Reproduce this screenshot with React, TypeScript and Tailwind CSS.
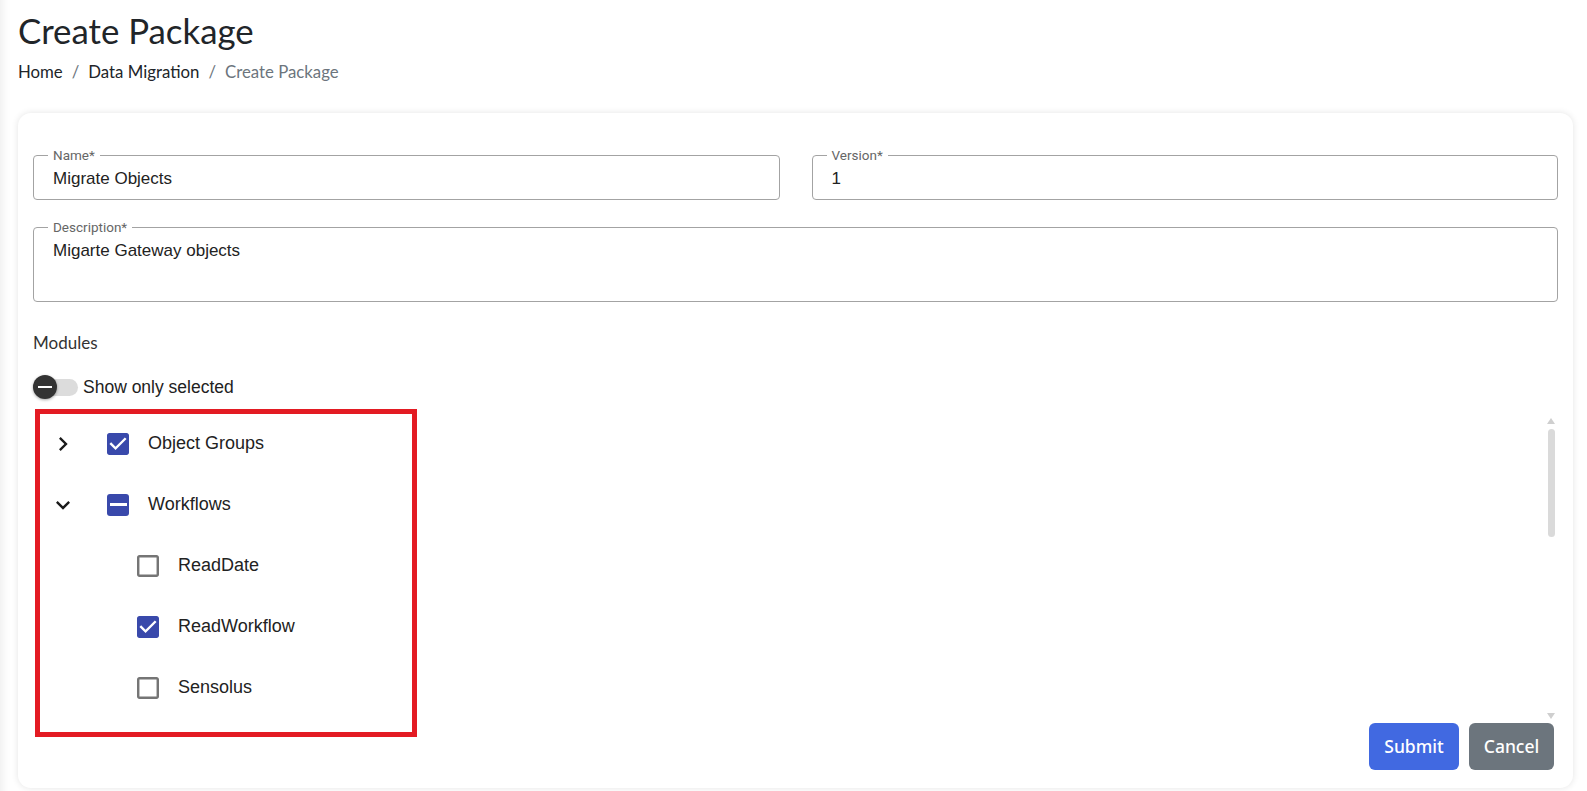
import React from "react";

const CHECKED = "M19 3H5c-1.11 0-2 .9-2 2v14c0 1.1.89 2 2 2h14c1.11 0 2-.9 2-2V5c0-1.1-.89-2-2-2zm-9 14l-5-5 1.41-1.41L10 14.17l7.59-7.59L19 8l-9 9z";
const BLANK = "M19 5v14H5V5h14m0-2H5c-1.1 0-2 .9-2 2v14c0 1.1.9 2 2 2h14c1.1 0 2-.9 2-2V5c0-1.1-.9-2-2-2z";

function Checkbox({ state }: { state: "checked" | "blank" | "indeterminate" }) {
  if (state === "indeterminate") {
    return (
      <div className="w-[22px] h-[22px] rounded-[3px] bg-[#3949ab] flex items-center justify-center shrink-0">
        <div className="w-[17px] h-[3px] bg-white" />
      </div>
    );
  }
  return (
    <svg width="22" height="22" viewBox="3 3 18 18" className="shrink-0">
      <path d={state === "checked" ? CHECKED : BLANK} fill={state === "checked" ? "#3949ab" : "#757575"} />
    </svg>
  );
}

function ChevronRight() {
  return (
    <svg width="28" height="28" viewBox="0 0 24 24">
      <path d="M10 6 8.59 7.41 13.17 12l-4.58 4.59L10 18l6-6z" fill="#1a1a1a" />
    </svg>
  );
}

function ChevronDown() {
  return (
    <svg width="28" height="28" viewBox="0 0 24 24">
      <path d="M16.59 8.59 12 13.17 7.41 8.59 6 10l6 6 6-6z" fill="#1a1a1a" />
    </svg>
  );
}

function Field({ label, value, tall }: { label: string; value: string; tall?: boolean }) {
  return (
    <div className={`relative border border-[#a3a3a3] rounded-[4px] ${tall ? "h-[75px]" : "h-[45px]"}`}>
      <span className="absolute left-[14px] top-[-9px] bg-white px-[5px] text-[13.5px] leading-[16px] text-[#666] font-['Roboto',sans-serif]">
        {label}
      </span>
      <div className="pl-[19px] pt-[12px] text-[17px] leading-[22px] text-[#222] font-['Liberation_Sans',Arial,sans-serif]">
        {value}
      </div>
    </div>
  );
}

export default function App() {
  const rows: { level: number; label: string; state: "checked" | "blank" | "indeterminate"; chevron?: "right" | "down" }[] = [
    { level: 0, label: "Object Groups", state: "checked", chevron: "right" },
    { level: 0, label: "Workflows", state: "indeterminate", chevron: "down" },
    { level: 1, label: "ReadDate", state: "blank" },
    { level: 1, label: "ReadWorkflow", state: "checked" },
    { level: 1, label: "Sensolus", state: "blank" },
  ];

  return (
    <div className="min-h-screen w-full bg-white shadow-[inset_12px_0_10px_-10px_rgba(0,0,0,0.08)] font-['Lato',sans-serif] overflow-hidden">
      <div className="pl-[18px] pt-[9px]">
        <h1 className="text-[34.8px] leading-[43px] text-[#212529]">Create Package</h1>
        <nav className="mt-[8px] flex items-center text-[16.8px] leading-[24px]">
          <span className="text-[#212529]">Home</span>
          <span className="px-[9px] text-[#6c757d]">/</span>
          <span className="text-[#212529]">Data Migration</span>
          <span className="px-[9px] text-[#6c757d]">/</span>
          <span className="text-[#6c757d]">Create Package</span>
        </nav>
      </div>

      <div className="ml-[18px] mr-[14px] mt-[29px] bg-white rounded-[13px] shadow-[0_0_7px_rgba(0,0,0,0.11)] px-[15px] pt-[42px] pb-[18px]">
        <div className="grid grid-cols-2 gap-x-[32px]">
          <Field label="Name*" value="Migrate Objects" />
          <Field label="Version*" value="1" />
        </div>
        <div className="mt-[27px]">
          <Field label="Description*" value="Migarte Gateway objects" tall />
        </div>

        <div className="mt-[29px] text-[17px] leading-[24px] text-[#333]">Modules</div>

        <div className="mt-[20px] flex items-center h-[24px]">
          <div className="relative w-[45px] h-[24px] flex items-center">
            <div className="w-[45px] h-[17px] rounded-full bg-[#dcdcdc]" />
            <div className="absolute left-0 top-0 w-[24px] h-[24px] rounded-full bg-[#333] shadow-[0_1px_3px_rgba(0,0,0,0.35)] flex items-center justify-center">
              <div className="w-[14px] h-[2px] bg-white" />
            </div>
          </div>
          <span className="ml-[5px] text-[17.5px] text-[#222] font-['Liberation_Sans',Arial,sans-serif]">Show only selected</span>
        </div>

        <div className="relative mt-[14px] h-[310px]">
          <div className="flex flex-col">
            {rows.map((r) => (
              <div key={r.label} className="flex items-center h-[61px]">
                {r.level === 0 ? (
                  <>
                    <div className="ml-[16px] w-[28px] h-[28px] flex items-center justify-center">
                      {r.chevron === "right" ? <ChevronRight /> : <ChevronDown />}
                    </div>
                    <div className="ml-[30px]">
                      <Checkbox state={r.state} />
                    </div>
                  </>
                ) : (
                  <div className="ml-[104px]">
                    <Checkbox state={r.state} />
                  </div>
                )}
                <span className="ml-[19px] text-[18px] text-[#222] font-['Liberation_Sans',Arial,sans-serif]">{r.label}</span>
              </div>
            ))}
          </div>

          {/* scrollbar */}
          <div className="absolute right-[2px] top-0 h-full w-[9px]">
            <div className="absolute left-0 top-[5px] w-0 h-0 border-l-[4.5px] border-r-[4.5px] border-b-[6px] border-l-transparent border-r-transparent border-b-[#cfcfcf]" />
            <div className="absolute left-[1px] top-[16px] w-[7px] h-[108px] rounded-full bg-[#dadada]" />
            <div className="absolute left-0 top-[300px] w-0 h-0 border-l-[4.5px] border-r-[4.5px] border-t-[6px] border-l-transparent border-r-transparent border-t-[#cfcfcf]" />
          </div>

          {/* annotation box */}
          <div className="pointer-events-none absolute left-[2px] top-[-4px] w-[382px] h-[328px] border-[5px] border-[#e31b23]" />
        </div>

        <div className="flex justify-end gap-[10px] pr-[4px]">
          <button className="h-[47px] w-[90px] rounded-[6px] bg-[#4169e1] text-white text-[17.5px] font-medium font-['Noto_Sans',sans-serif]">
            Submit
          </button>
          <button className="h-[47px] w-[85px] rounded-[6px] bg-[#6c757d] text-white text-[17.5px] font-medium font-['Noto_Sans',sans-serif]">
            Cancel
          </button>
        </div>
      </div>
    </div>
  );
}
